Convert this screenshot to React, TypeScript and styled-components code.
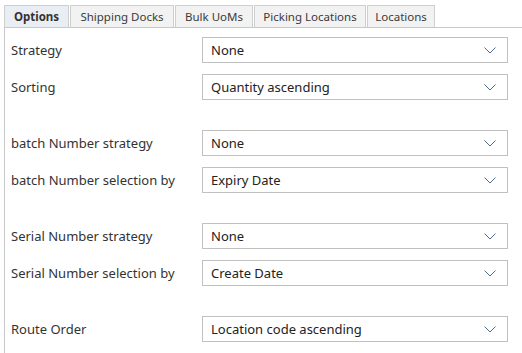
import React from "react";
import styled, { createGlobalStyle } from "styled-components";

const Global = createGlobalStyle`
  html, body { margin: 0; padding: 0; background: #fff; }
  body { font-family: "Noto Sans", "Open Sans", sans-serif; color: #333; }
`;

const Page = styled.div`
  padding: 5px 0 0 4px;
  width: 518px;
  height: 348px;
  overflow: hidden;
`;

const TabBar = styled.div`
  display: flex;
  border-bottom: 1px solid #c8c8c8;
  height: 22px;
`;

const Tab = styled.div<{ $active?: boolean; $w: number }>`
  box-sizing: border-box;
  display: flex;
  align-items: center;
  justify-content: center;
  width: ${(p) => p.$w}px;
  height: 22px;
  margin-right: 1px;
  border: 1px solid #cfcfcf;
  border-bottom: none;
  background: ${(p) => (p.$active ? "#e9eef5" : "#f2f2f2")};
  font-size: 11.5px;
  font-weight: ${(p) => (p.$active ? 700 : 400)};
  color: ${(p) => (p.$active ? "#333" : "#3a3a3a")};
  white-space: nowrap;
`;

const Panel = styled.div`
  border-left: 1px solid #c8c8c8;
  padding: 9px 0 0 6px;
  display: flex;
  flex-direction: column;
  gap: 11px;
  height: 400px;
`;

const Row = styled.div`
  display: grid;
  grid-template-columns: 191px 306px;
  align-items: center;
  height: 26px;
`;

const Spacer = styled.div`
  height: 19px;
  margin-top: -11px;
`;

const Label = styled.div`
  font-size: 13px;
  color: #333;
  white-space: nowrap;
`;

const Select = styled.div`
  box-sizing: border-box;
  height: 26px;
  border: 1px solid #c0c0c0;
  background: #fff;
  display: flex;
  align-items: center;
  justify-content: space-between;
  padding: 0 11px 0 8px;
  font-size: 13px;
  color: #222;
`;

const Chevron = () => (
  <svg width="12" height="7" viewBox="0 0 12 7">
    <path d="M0.5 0.5 L6 6 L11.5 0.5" fill="none" stroke="#4a6d98" strokeWidth="1" />
  </svg>
);

type Item = { label: string; value: string } | null;

const items: Item[] = [
  { label: "Strategy", value: "None" },
  { label: "Sorting", value: "Quantity ascending" },
  null,
  { label: "batch Number strategy", value: "None" },
  { label: "batch Number selection by", value: "Expiry Date" },
  null,
  { label: "Serial Number strategy", value: "None" },
  { label: "Serial Number selection by", value: "Create Date" },
  null,
  { label: "Route Order", value: "Location code ascending" },
];

const tabs: [string, number][] = [
  ["Options", 65],
  ["Shipping Docks", 104],
  ["Bulk UoMs", 78],
  ["Picking Locations", 112],
  ["Locations", 68],
];

export default function App() {
  return (
    <>
      <Global />
      <Page>
        <TabBar>
          {tabs.map(([t, w], i) => (
            <Tab key={t} $w={w} $active={i === 0}>
              {t}
            </Tab>
          ))}
        </TabBar>
        <Panel>
          {items.map((it, i) =>
            it ? (
              <Row key={i}>
                <Label>{it.label}</Label>
                <Select>
                  <span>{it.value}</span>
                  <Chevron />
                </Select>
              </Row>
            ) : (
              <Spacer key={i} />
            )
          )}
        </Panel>
      </Page>
    </>
  );
}
